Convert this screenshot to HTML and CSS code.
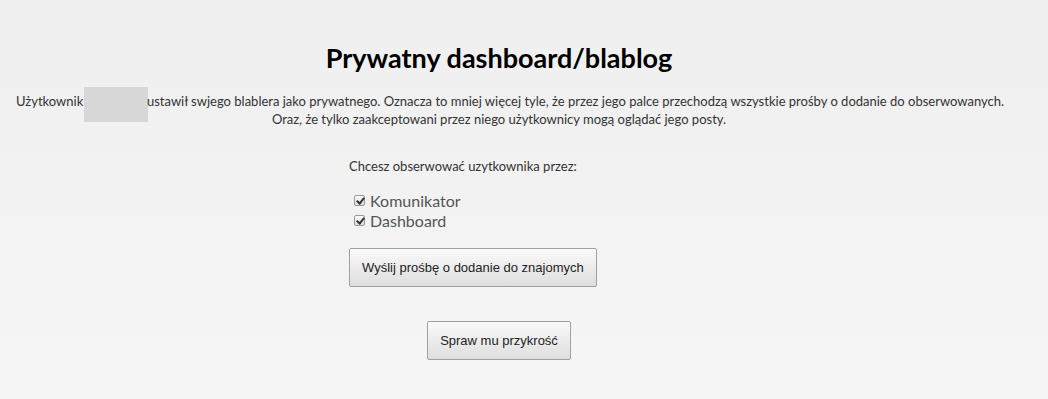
FILE: index.html
```html
<!DOCTYPE html>
<html lang="pl">
<head>
  <meta charset="UTF-8" />
  <title>Prywatny dashboard/blablog</title>
  <link rel="stylesheet" href="styles.css">
</head>
<body>
  <div class="page">
    <h1>Prywatny dashboard/blablog</h1>

    <p class="intro">
      <span class="line">Użytkownik <span class="user"></span> ustawił swjego blablera jako prywatnego. Oznacza to mniej więcej tyle, że przez jego palce przechodzą wszystkie prośby o dodanie do obserwowanych.</span>
      <span class="line">Oraz, że tylko zaakceptowani przez niego użytkownicy mogą oglądać jego posty.</span>
    </p>

    <form class="follow">
      <p class="ask">Chcesz obserwować uzytkownika przez:</p>
      <label class="opt"><input type="checkbox" checked> Komunikator</label>
      <label class="opt"><input type="checkbox" checked> Dashboard</label>
      <button type="submit" class="btn">Wyślij prośbę o dodanie do znajomych</button>
    </form>

    <div class="decline">
      <button type="button" class="btn">Spraw mu przykrość</button>
    </div>
  </div>
</body>
</html>
```

FILE: styles.css
```css
html {
  background: #f5f5f5;
}
body {
  margin: 0;
  font-family: Lato, 'Noto Sans', sans-serif;
  color: #333;
  background: linear-gradient(#efefef, #f5f5f5);
  min-height: 365px;
}
.page {
  width: 966px;
  margin-left: 16px;
  padding-top: 40px;
  text-align: center;
}
h1 {
  margin: 0 0 16px;
  font-size: 27px;
  color: #000;
  line-height: 36px;
}
.intro {
  margin: 0;
  font-size: 13px;
  line-height: 18px;
  color: #333;
}
.intro .line {
  display: block;
  white-space: nowrap;
}
.user {
  display: inline-block;
  width: 64px;
  height: 35px;
  background: #d7d7d7;
  margin: -6px -4px -16px -3px;
}
.follow {
  width: 300px;
  margin: 30px auto 0;
  text-align: left;
}
.ask {
  margin: 0 0 17px;
  font-size: 13px;
  line-height: 16px;
  color: #333;
}
.opt {
  display: block;
  font-size: 16px;
  line-height: 20px;
  color: #555;
  padding-left: 5px;
}
.opt input {
  appearance: none;
  width: 11px;
  height: 11px;
  margin: 0 1px 0 0;
  border: 1px solid #999;
  border-radius: 2px;
  background: linear-gradient(#fcfcfc, #dcdcdc);
  position: relative;
  vertical-align: 1px;
}
.opt input:checked::after {
  content: "";
  position: absolute;
  left: 3px;
  top: 0;
  width: 3px;
  height: 6px;
  border: solid #333;
  border-width: 0 2px 2px 0;
  transform: rotate(40deg);
}
.btn {
  font-family: 'Liberation Sans', Arial, sans-serif;
  font-size: 13px;
  line-height: 15px;
  color: #222;
  padding: 11px 12px;
  border: 1px solid #a0a0a0;
  border-radius: 2px;
  background: linear-gradient(#fafafa, #dedede);
}
.follow .btn {
  margin-top: 17px;
}
.decline {
  margin-top: 34px;
}
```
